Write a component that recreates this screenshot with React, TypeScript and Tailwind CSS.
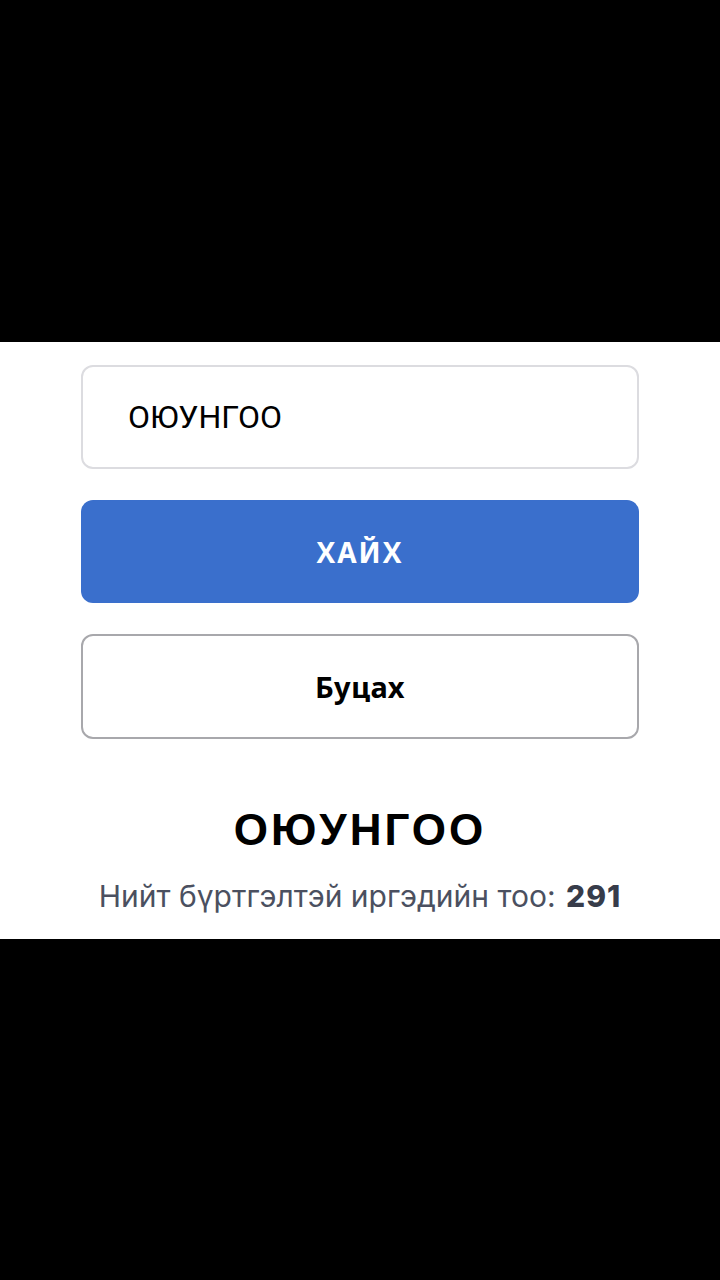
import { useState } from "react";

function App() {
  const [query, setQuery] = useState<string>("ОЮУНГОО");
  const total = 291;

  return (
    <div className="flex min-h-[1280px] flex-col bg-black">
      <div className="h-[342px]"></div>
      <div className="flex flex-col bg-white px-[81px] pt-[23px]">
        <input
          value={query}
          onChange={(e) => setQuery(e.target.value)}
          className="h-[104px] w-full rounded-[12px] border-2 border-[#dcdce0] bg-white px-[45px] text-[32px] text-black outline-none [font-family:Roboto,sans-serif]"
        />
        <button className="mt-[31px] h-[103px] w-full rounded-[12px] bg-[#3a6fcc] text-[28px] font-bold tracking-[2px] text-white [font-family:'Noto_Sans',sans-serif]">
          ХАЙХ
        </button>
        <button className="mt-[31px] h-[105px] w-full rounded-[12px] border-2 border-[#a8a8ac] bg-white text-[29px] font-bold tracking-[0.5px] text-black [font-family:'Noto_Sans',sans-serif]">
          Буцах
        </button>
        <h1 className="mt-[64px] text-center text-[44px] leading-[54px] font-bold tracking-[3px] text-black [font-family:'Liberation_Sans',Arial,sans-serif]">
          {query}
        </h1>
        <p className="mt-[20px] mb-[24px] text-center text-[30px] leading-[38px] text-[#4b5060] [font-family:Inter,sans-serif]">
          Нийт бүртгэлтэй иргэдийн тоо: <span className="ml-[2px] font-extrabold tracking-[1px] text-[#373c4a]">{total}</span>
        </p>
      </div>
    </div>
  );
}

export default App;
